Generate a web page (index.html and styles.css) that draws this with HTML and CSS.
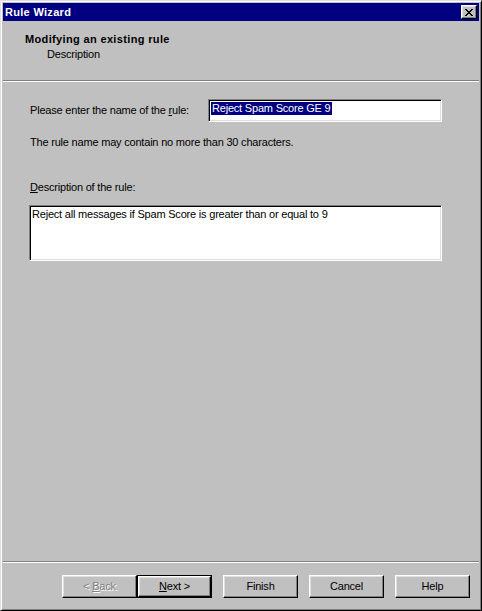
FILE: index.html
```
<!DOCTYPE html>
<html>
<head>
<meta charset="utf-8">
<link rel="stylesheet" href="styles.css">
</head>
<body>
<div class="window">
  <div class="titlebar">
    <span class="title">Rule Wizard</span>
    <span class="close">
      <svg width="8" height="7" viewBox="0 0 8 7" shape-rendering="crispEdges">
        <path d="M0 0h2v1H0zM6 0h2v1H6zM1 1h2v1H1zM5 1h2v1H5zM2 2h4v1H2zM3 3h2v1H3zM2 4h4v1H2zM1 5h2v1H1zM5 5h2v1H5zM0 6h2v1H0zM6 6h2v1H6z" fill="#000"/>
      </svg>
    </span>
  </div>
  <div class="header">
    <div class="heading">Modifying an existing rule</div>
    <div class="subheading">Description</div>
  </div>
  <div class="sep"></div>
  <div class="main">
    <div class="name-row">
      <label class="name-label">Please enter the name of the <u>r</u>ule:</label>
      <div class="field"><span class="sel">Reject Spam Score GE 9</span></div>
    </div>
    <div class="note">The rule name may contain no more than 30 characters.</div>
    <div class="desc-label"><u>D</u>escription of the rule:</div>
    <div class="textarea">Reject all messages if Spam Score is greater than or equal to 9</div>
  </div>
  <div class="sep"></div>
  <div class="buttons">
    <span class="btn disabled"><span>&lt; <u>B</u>ack</span></span>
    <span class="btn default"><span class="inner"><span><u>N</u>ext &gt;</span></span></span>
    <span class="btn spaced"><span>Finish</span></span>
    <span class="btn spaced"><span>Cancel</span></span>
    <span class="btn spaced"><span>Help</span></span>
  </div>
</div>
</body>
</html>
```

FILE: styles.css
```
html, body {
  margin: 0;
  padding: 0;
  background: #c0c0c0;
}
body {
  font-family: "Liberation Sans", Arial, sans-serif;
  font-size: 11px;
  line-height: 13px;
  color: #000;
  letter-spacing: -0.2px;
}
.window {
  width: 482px;
  height: 611px;
  box-sizing: border-box;
  border: 1px solid;
  border-color: #dfdfdf #000 #000 #dfdfdf;
  box-shadow: inset 1px 1px #fff, inset -1px -1px #808080;
  padding: 2px;
  display: flex;
  flex-direction: column;
  background: #c0c0c0;
}
.titlebar {
  height: 18px;
  background: #000080;
  display: flex;
  align-items: center;
  justify-content: space-between;
  padding: 0 2px 0 2px;
  flex: none;
}
.title {
  color: #fff;
  font-weight: bold;
  letter-spacing: 0.3px;
}
.close {
  width: 16px;
  height: 14px;
  box-sizing: border-box;
  background: #c0c0c0;
  border: 1px solid;
  border-color: #fff #000 #000 #fff;
  box-shadow: inset -1px -1px #808080, inset 1px 1px #dfdfdf;
  display: flex;
  align-items: center;
  justify-content: center;
}
.close svg {
  display: block;
  margin-left: -1px;
}
.header {
  height: 59px;
  box-sizing: border-box;
  padding: 11px 0 0 22px;
  flex: none;
}
.heading {
  font-weight: bold;
  letter-spacing: 0.35px;
  line-height: 15px;
}
.subheading {
  padding-left: 22px;
  line-height: 15px;
}
.sep {
  height: 0;
  border-top: 1px solid #808080;
  border-bottom: 1px solid #fff;
  flex: none;
}
.main {
  flex: 1;
  padding: 17px 0 0 27px;
}
.name-row {
  display: flex;
  align-items: center;
  height: 23px;
}
.name-label {
  width: 178px;
  flex: none;
}
.field {
  width: 234px;
  height: 23px;
  box-sizing: border-box;
  background: #fff;
  border: 1px solid;
  border-color: #808080 #fff #fff #808080;
  box-shadow: inset 1px 1px #000, inset -1px -1px #dfdfdf;
  padding: 2px 0 0 2px;
}
.sel {
  display: inline-block;
  background: #000080;
  color: #fff;
  padding: 0 1px;
  line-height: 13px;
}
.note {
  margin-top: 14px;
}
.desc-label {
  margin-top: 32px;
}
.textarea {
  margin-top: 11px;
  margin-left: -1px;
  width: 413px;
  height: 56px;
  box-sizing: border-box;
  background: #fff;
  border: 1px solid;
  border-color: #808080 #fff #fff #808080;
  box-shadow: inset 1px 1px #000, inset -1px -1px #dfdfdf;
  padding: 2px 0 0 2px;
}
.buttons {
  flex: none;
  display: flex;
  height: 23px;
  padding: 12px 0 10px 59px;
}
.btn {
  width: 75px;
  height: 23px;
  box-sizing: border-box;
  background: #c0c0c0;
  border: 1px solid;
  border-color: #fff #000 #000 #fff;
  box-shadow: inset -1px -1px #808080, inset 1px 1px #dfdfdf;
  display: flex;
  align-items: center;
  justify-content: center;
  flex: none;
}
.btn.spaced {
  margin-left: 11px;
}
.btn.disabled {
  color: #808080;
  text-shadow: 1px 1px #fff;
}
.btn.default {
  border: 1px solid #000;
  box-shadow: none;
  padding: 0;
}
.btn.default .inner {
  width: 100%;
  height: 100%;
  box-sizing: border-box;
  border: 1px solid;
  border-color: #fff #000 #000 #fff;
  box-shadow: inset -1px -1px #808080, inset 1px 1px #dfdfdf;
  display: flex;
  align-items: center;
  justify-content: center;
}
```
